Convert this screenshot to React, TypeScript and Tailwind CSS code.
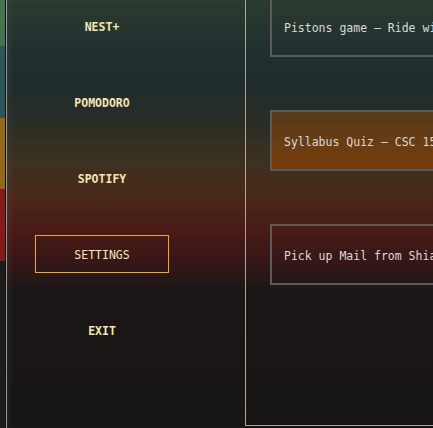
import React from 'react';

const navItems = [
  { label: 'NEST+', active: false },
  { label: 'POMODORO', active: false },
  { label: 'SPOTIFY', active: false },
  { label: 'SETTINGS', active: true },
  { label: 'EXIT', active: false },
];

const tasks = [
  { text: 'Pistons game – Ride with Sam', highlight: false },
  { text: 'Syllabus Quiz – CSC 150 Chapter 1', highlight: true },
  { text: 'Pick up Mail from Shiawassee Hall', highlight: false },
];

export default function App() {
  return (
    <div
      className="flex h-[428px] w-[433px] overflow-hidden bg-[linear-gradient(180deg,#2b3b2e_0%,#21302f_12%,#1f2c2e_20%,#2b2e25_29%,#3d3120_38%,#4a2818_46%,#481a17_54%,#3a1716_60%,#1b1716_68%,#171615_100%)]"
      style={{ fontFamily: '"DejaVu Sans Mono", "Liberation Mono", monospace' }}
    >
      {/* colour strip */}
      <div className="flex w-[5px] shrink-0 flex-col">
        <div className="h-[46px] bg-[#447350]" />
        <div className="h-[72px] bg-[#2a5858]" />
        <div className="h-[71px] bg-[#946817]" />
        <div className="h-[72px] bg-[#871a18]" />
        <div className="flex-1 bg-[#1c1c1c]" />
      </div>
      <div className="w-px shrink-0 bg-[#0f0f0f]" />
      <div className="w-px shrink-0 bg-[#9a9a9a]" />

      {/* sidebar nav */}
      <div className="flex w-[238px] shrink-0 flex-col gap-[38px] pl-[28px] pt-[7px] shadow-[inset_4px_0_4px_rgba(255,255,255,0.04)]">
        {navItems.map(item => (
          <div
            key={item.label}
            className={`flex h-[38px] w-[134px] items-center justify-center pt-[4px] text-[11.5px] text-[#f6e6b3] ${
              item.active ? 'border border-[#f3a91f] font-normal' : 'font-bold'
            }`}
          >
            {item.label}
          </div>
        ))}
      </div>

      {/* main panel */}
      <div className="-mt-[20px] mb-[2px] flex h-[446px] w-[400px] shrink-0 flex-col gap-[53px] border-b border-l border-[#b3a48c] pl-[24px] pt-[16px]">
        {tasks.map(t => (
          <div
            key={t.text}
            className={`flex h-[61px] w-[380px] shrink-0 items-center whitespace-nowrap border-2 border-[#5b5b5b] pl-[12px] pt-[4px] text-[11.5px] text-[#dadada] ${
              t.highlight ? 'bg-[linear-gradient(180deg,#563a1b_0%,#6a3d12_60%,#763c0c_100%)]' : ''
            }`}
          >
            {t.text}
          </div>
        ))}
      </div>
    </div>
  );
}
